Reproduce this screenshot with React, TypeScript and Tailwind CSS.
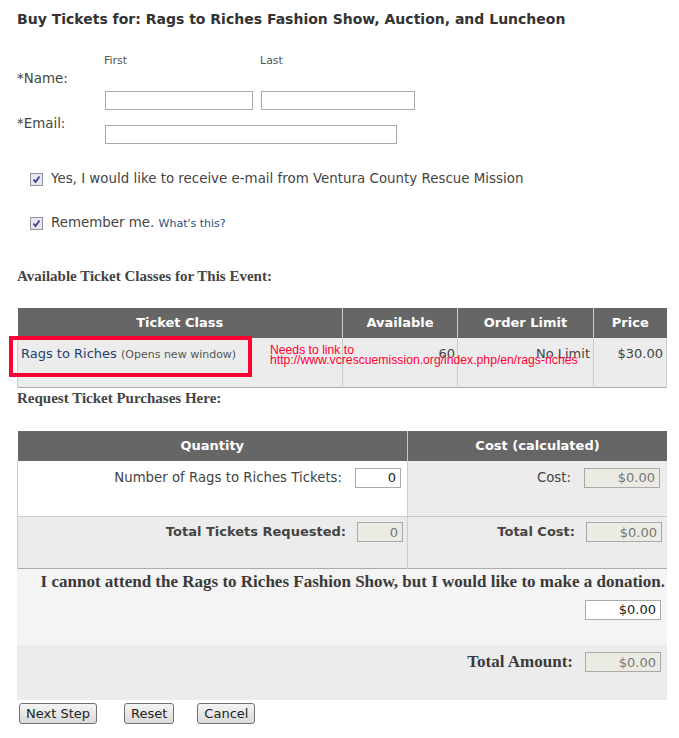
import React from "react";

const sans = { fontFamily: '"DejaVu Sans", Verdana, sans-serif' };
const serif = { fontFamily: '"Liberation Serif", "Times New Roman", serif' };

function TextInput({ w, value, readOnly }: { w: string; value?: string; readOnly?: boolean }) {
  return (
    <input
      type="text"
      readOnly={readOnly}
      defaultValue={value}
      className={`${w} h-[20px] border border-[#a9a9a9] px-[4px] text-right text-[13px] outline-none ${
        readOnly ? "bg-[#ebebe4] text-[#777]" : "bg-white text-[#222]"
      }`}
    />
  );
}

function Check({ label, extra }: { label: string; extra?: React.ReactNode }) {
  return (
    <div className="flex items-center h-[20px] pl-[13px]">
      <span className="w-[13px] h-[13px] border border-[#8f8f9d] bg-[#e8e8f2] flex items-center justify-center">
        <svg width="9" height="9" viewBox="0 0 9 9">
          <path d="M1.5 4.5 L3.5 7 L7.5 1.5" stroke="#3b3f8f" strokeWidth="1.8" fill="none" />
        </svg>
      </span>
      <span className="ml-[8px] text-[13.4px] text-[#444]">
        {label}
        {extra}
      </span>
    </div>
  );
}

function Btn({ children }: { children: React.ReactNode }) {
  return (
    <button className="h-[21px] px-[6px] text-[13px] leading-none text-[#222] border border-[#707070] rounded-[3px] bg-gradient-to-b from-[#f4f4f4] to-[#dadada]">
      {children}
    </button>
  );
}

export default function App() {
  return (
    <div className="w-[679px] h-[738px] bg-white text-[#444] relative overflow-hidden" style={sans}>
      <div className="pl-[17px] w-[667px]">
        <h1 className="pt-[10px] text-[14px] leading-[18px] font-bold text-[#333]">
          Buy Tickets for: Rags to Riches Fashion Show, Auction, and Luncheon
        </h1>

        {/* name + email */}
        <div className="mt-[27px] flex pl-[87px] text-[11px] leading-[12px] text-[#555]">
          <span className="w-[156px]">First</span>
          <span>Last</span>
        </div>
        <div className="mt-[5px] text-[13.4px] leading-[14px]">*Name:</div>
        <div className="mt-[5px] ml-[88px] flex gap-[8px]">
          <input className="w-[148px] h-[19px] border border-[#a9a9a9]" />
          <input className="w-[154px] h-[19px] border border-[#a9a9a9]" />
        </div>
        <div className="mt-[7px] flex items-start">
          <span className="w-[88px] text-[13.4px] leading-[14px]">*Email:</span>
          <input className="mt-[8px] w-[292px] h-[19px] border border-[#a9a9a9]" />
        </div>

        <div className="mt-[25px]">
          <Check label="Yes, I would like to receive e-mail from Ventura County Rescue Mission" />
        </div>
        <div className="mt-[24px]">
          <Check
            label="Remember me. "
            extra={<a className="text-[11px] text-[#1f4f82]">What's this?</a>}
          />
        </div>

        <h2 className="mt-[35px] text-[15px] leading-[17px] font-bold text-[#444]" style={serif}>
          Available Ticket Classes for This Event:
        </h2>

        {/* ticket classes */}
        <div className="relative mt-[23px]">
          <table className="w-[650px] border-collapse text-[13px]">
            <thead>
              <tr className="h-[30px] bg-[#666] text-white font-bold">
                <th className="w-[325px] border-r border-[#c8c8c8] font-bold">Ticket Class</th>
                <th className="w-[115px] border-r border-[#c8c8c8] font-bold">Available</th>
                <th className="w-[136px] border-r border-[#c8c8c8] font-bold">Order Limit</th>
                <th className="font-bold">Price</th>
              </tr>
            </thead>
            <tbody>
              <tr className="h-[49px] bg-[#ececec] align-top border-b border-[#aaa]">
                <td className="border-l border-r border-[#ccc] pl-[3px] pt-[6px]">
                  <a className="text-[#1f3f6e]">Rags to Riches</a>{" "}
                  <span className="text-[11px] text-[#555]">(Opens new window)</span>
                </td>
                <td className="border-r border-[#ccc] pr-[2px] pt-[6px] text-right">60</td>
                <td className="border-r border-[#ccc] pr-[3px] pt-[6px] text-right">No Limit</td>
                <td className="border-r border-[#ccc] pr-[3px] pt-[6px] text-right">$30.00</td>
              </tr>
            </tbody>
          </table>
          {/* review annotation overlay */}
          <div className="absolute left-[-8px] top-[28px] w-[243px] h-[41px] border-[4px] border-[#ff0033]" />
          <div
            className="absolute left-[253px] top-[37px] text-[12.2px] leading-[10px] text-[#ff0033]"
            style={{ fontFamily: '"Liberation Sans", Arial, sans-serif' }}
          >
            Needs to link to
            <br />
            http://www.vcrescuemission.org/index.php/en/rags-riches
          </div>
        </div>

        <h2 className="mt-[2px] text-[15px] leading-[17px] font-bold text-[#444]" style={serif}>
          Request Ticket Purchases Here:
        </h2>

        {/* purchase table */}
        <table className="mt-[24px] w-[650px] border-collapse text-[13px]">
          <thead>
            <tr className="h-[30px] bg-[#666] text-white">
              <th className="w-[390px] border-r border-[#c8c8c8] font-bold">Quantity</th>
              <th className="font-bold">Cost (calculated)</th>
            </tr>
          </thead>
          <tbody>
            <tr className="h-[56px] align-top border-b border-[#ccc]">
              <td className="bg-white border-l border-r border-[#ccc] pt-[7px] pr-[6px]">
                <div className="flex items-center justify-end gap-[13px]">
                  <span className="text-[13.3px]">Number of Rags to Riches Tickets:</span>
                  <TextInput w="w-[46px]" value="0" />
                </div>
              </td>
              <td className="bg-[#ececec] pt-[7px] pr-[7px]">
                <div className="flex items-center justify-end gap-[13px]">
                  <span className="text-[13.3px]">Cost:</span>
                  <TextInput w="w-[76px]" value="$0.00" readOnly />
                </div>
              </td>
            </tr>
            <tr className="h-[52px] align-top bg-[#ececec] border-b border-[#aaa]">
              <td className="border-l border-r border-[#ccc] pt-[5px] pr-[4px]">
                <div className="flex items-center justify-end gap-[11px]">
                  <span className="font-bold">Total Tickets Requested:</span>
                  <TextInput w="w-[46px]" value="0" readOnly />
                </div>
              </td>
              <td className="pt-[5px] pr-[5px]">
                <div className="flex items-center justify-end gap-[11px]">
                  <span className="font-bold">Total Cost:</span>
                  <TextInput w="w-[76px]" value="$0.00" readOnly />
                </div>
              </td>
            </tr>
          </tbody>
        </table>

        {/* donation */}
        <div className="w-[650px] h-[76px] bg-[#f4f4f4] pt-[3px] pr-[2px] flex flex-col items-end">
          <p className="text-[17px] leading-[20px] font-bold text-[#3a3a3a]" style={serif}>
            I cannot attend the Rags to Riches Fashion Show, but I would like to make a donation.
          </p>
          <div className="mt-[5px] pr-[4px]">
            <TextInput w="w-[76px]" value="$0.00" />
          </div>
        </div>
        <div className="w-[650px] h-[55px] bg-[#ececec] pt-[7px] pr-[6px] flex justify-end items-start gap-[12px]">
          <span className="text-[17px] leading-[20px] font-bold text-[#3a3a3a]" style={serif}>
            Total Amount:
          </span>
          <TextInput w="w-[76px]" value="$0.00" readOnly />
        </div>

        <div className="mt-[3px] pl-[2px] flex">
          <Btn>Next Step</Btn>
          <span className="w-[27px]" />
          <Btn>Reset</Btn>
          <span className="w-[23px]" />
          <Btn>Cancel</Btn>
        </div>
      </div>
    </div>
  );
}
